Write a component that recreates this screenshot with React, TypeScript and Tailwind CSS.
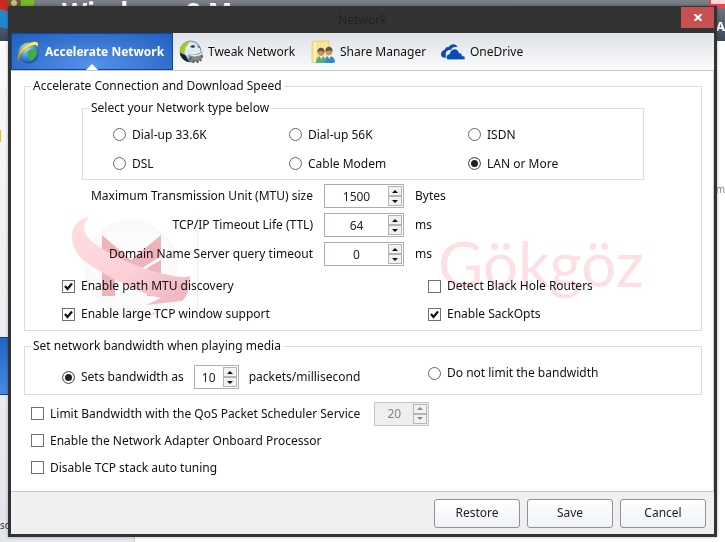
import React, { useState } from "react";

function GlobeIcon() {
  return (
    <svg width="24" height="24" viewBox="0 0 24 24" aria-hidden="true">
      <defs>
        <radialGradient id="sea" cx="0.4" cy="0.3" r="0.8">
          <stop offset="0" stopColor="#b9e4fa" />
          <stop offset="0.5" stopColor="#3d8fd6" />
          <stop offset="1" stopColor="#0b3f92" />
        </radialGradient>
        <linearGradient id="ring" x1="0" y1="1" x2="1" y2="0">
          <stop offset="0" stopColor="#c98a00" />
          <stop offset="0.5" stopColor="#ffe14a" />
          <stop offset="1" stopColor="#fff6a0" />
        </linearGradient>
      </defs>
      <circle cx="12.500" cy="13" r="10.500" fill="url(#sea)" />
      <path d="M6 6c3-3 6-4 8-3-1 2-4 3-5 5-2 1-3 3-4 3 0-2 0-3 1-5z" fill="#8fd0c0" />
      <path d="M12 11c3-2 7-3 9 0 0 5-3 8-6 10-2-1-1-4-3-6-1-2-2-2 0-4z" fill="#43ac3c" />
      <path d="M3 21C0 17 4 8 12 4c5-3 10-3 10 0 0 1 0 2-1 3 0-3-4-2-8 0C7 10 2 16 3 21z" fill="url(#ring)" stroke="#b98600" strokeWidth="0.5" />
    </svg>
  );
}

function TweakIcon() {
  return (
    <svg width="24" height="24" viewBox="0 0 24 24" aria-hidden="true">
      <defs>
        <radialGradient id="ball" cx="0.5" cy="0.35" r="0.7">
          <stop offset="0" stopColor="#ffffff" />
          <stop offset="0.6" stopColor="#b9d2e2" />
          <stop offset="1" stopColor="#18384e" />
        </radialGradient>
      </defs>
      <circle cx="11.500" cy="11.500" r="10.500" fill="url(#ball)" stroke="#3e5566" strokeWidth="0.6" />
      <path d="M1 11c0-5 4-9 9-9-1 3-3 4-4 7l-1 5c-2 0-4-1-4-3z" fill="#a3cc1d" />
      <path d="M1 13c2 1 5 1 6 3l3 6C5 21 1 17 1 13z" fill="#14202a" />
      <path d="M6 10c3-4 10-5 14-3l2 5c-4 4-11 5-15 3z" fill="#dfeaf3" />
      <path d="M11 7c1-2 4-2 5-1l-1 2zM18 6l3 1-1 1z" fill="#243746" />
      <path d="M9 13c3 2 6 2 9 1l5-2 1 4-2 4-5 2-5-1-2-3z" fill="#85898b" />
      <path d="M11 20l1-3m2 6l1-3m4 3l-1-3m4 1l-1-2m3-2l-2-1" stroke="#5d6163" strokeWidth="2" />
      <path d="M9 13.500c4 3 9 3 14 0" stroke="#e4e7e8" strokeWidth="1.500" fill="none" />
    </svg>
  );
}

function ShareIcon() {
  return (
    <svg width="24" height="24" viewBox="0 0 24 24" aria-hidden="true">
      <path d="M1 2l3-1h14v20l-14 2-3-1z" fill="#f8e596" stroke="#e2c55c" strokeWidth="0.700" />
      <path d="M4 2v20" stroke="#fff7cd" strokeWidth="1.500" />
      <path d="M5 23c0-5 2-7 5-7s5 2 5 7z" fill="#5aab82" />
      <path d="M14 23c0-5 1-7 4-7s6 2 6 6l-2 1z" fill="#2f8fc4" />
      <path d="M8.500 16l1.700 3 1.700-3zM16.500 16l1.700 3 1.700-3z" fill="#e9f3f4" />
      <circle cx="10" cy="12.500" r="3.200" fill="#c9936a" />
      <circle cx="18" cy="12" r="3.200" fill="#c9936a" />
      <path d="M6.500 13c-1-7 8-7 7 0-1-2-5-3-7 0zM14.500 12c-1-7 8-7 7 0-1-2-5-2-7 0z" fill="#5d5546" />
    </svg>
  );
}

function CloudIcon() {
  return (
    <svg width="24" height="16" viewBox="0 0 25 16" aria-hidden="true" fill="#0b4bb5">
      <path d="M5 14C1 14 0 12 0 10s2-4 4-4c0-2 2-4 4-3 2-4 8-4 9 0-4-1-6 1-7 3-4 0-5 2-5 4z" />
      <path d="M8 16c-3 0-4-5 1-6 0-5 8-8 10-1 2 0 3 1 3 3 4 0 4 4 1 4z" stroke="#edeff2" strokeWidth="0.600" />
    </svg>
  );
}

function Choice({
  type,
  name,
  label,
  checked = false,
}: {
  type: "radio" | "checkbox";
  name?: string;
  label: string;
  checked?: boolean;
}) {
  if (type === "radio") {
    return (
      <label className="flex items-center gap-1.5 leading-4">
        <input
          type="radio"
          name={name}
          defaultChecked={checked}
          className="size-[13px] shrink-0 appearance-none rounded-full border border-[#666] bg-white checked:bg-[#222] checked:shadow-[inset_0_0_0_2px_white]"
        />
        <span className="whitespace-nowrap">{label}</span>
      </label>
    );
  }
  return (
    <label className="flex items-center gap-1.5 leading-4">
      <span className="grid size-[13px] shrink-0">
        <input
          type="checkbox"
          defaultChecked={checked}
          className="peer col-start-1 row-start-1 size-[13px] appearance-none border border-[#707070] bg-white"
        />
        <svg
          viewBox="0 0 13 13"
          aria-hidden="true"
          className="pointer-events-none invisible col-start-1 row-start-1 size-[13px] peer-checked:visible"
        >
          <path d="M3 6l2.500 3L10 3.500" fill="none" stroke="#111" strokeWidth="2.200" />
        </svg>
      </span>
      <span className="whitespace-nowrap">{label}</span>
    </label>
  );
}

function Spinner({
  id,
  value,
  width,
  disabled = false,
}: {
  id: string;
  value: number;
  width: string;
  disabled?: boolean;
}) {
  const [current, setCurrent] = useState(value);
  const button =
    "flex h-[10px] w-[14px] items-center justify-center border border-[#b4b4b8] bg-[#f2f2f2]";
  const arrow = disabled ? "#8a8a8a" : "#111";
  return (
    <div
      className={`flex h-6 items-center border pr-px ${width} ${
        disabled ? "border-[#c4c4c4] bg-[#efefef] text-[#838383]" : "border-[#abadb3] bg-white text-[#222]"
      }`}
    >
      <input
        id={id}
        type="text"
        inputMode="numeric"
        disabled={disabled}
        value={current}
        onChange={(e) => setCurrent(Number(e.target.value) || 0)}
        className="h-full w-0 min-w-0 flex-1 bg-transparent text-center outline-none"
      />
      <div className="flex flex-col">
        <button type="button" aria-label="Increase" disabled={disabled} className={button} onClick={() => setCurrent(current + 1)}>
          <svg width="6" height="3" viewBox="0 0 6 3">
            <path d="M0 3L3 0l3 3z" fill={arrow} />
          </svg>
        </button>
        <button type="button" aria-label="Decrease" disabled={disabled} className={button} onClick={() => setCurrent(current - 1)}>
          <svg width="6" height="3" viewBox="0 0 6 3">
            <path d="M0 0h6L3 3z" fill={arrow} />
          </svg>
        </button>
      </div>
    </div>
  );
}

function Group({ title, className, children }: { title: string; className: string; children: React.ReactNode }) {
  return (
    <fieldset className={`border border-[#dcdcdc] ${className}`}>
      <legend className="ml-1.5 h-5 px-0.5 leading-5">{title}</legend>
      {children}
    </fieldset>
  );
}

function Backdrop() {
  return (
    <div aria-hidden="true" className="absolute inset-0 flex flex-col overflow-hidden bg-white">
      <div className="flex h-[41px] shrink-0 justify-between overflow-hidden bg-linear-to-b from-[#7c8088] to-[#3c4758]">
        <div className="flex">
          <svg width="34" height="34" viewBox="0 0 34 34">
            <path d="M0 0h17v14L0 9z" fill="#c92b20" />
            <path d="M17 0h17v10L17 14z" fill="#78b928" />
            <path d="M0 10l17 5v16L0 27z" fill="#2387cf" />
            <circle cx="14" cy="3" r="7" fill="#6c5833" />
            <circle cx="14" cy="3" r="3" fill="#cdbb86" />
          </svg>
          <span className="-mt-0.5 ml-7 text-[26px] leading-7 font-bold text-white">Windows 8 Manager</span>
        </div>
        <div className="flex w-4 flex-col items-end">
          <div className="h-2 w-4 shrink-0 rounded-bl border-b-4 border-l-2 border-[#ed4550] bg-[#fbdcdc]" />
          <span className="mt-2.5 text-[13px] leading-4 font-bold text-white">A</span>
        </div>
      </div>
      <div className="flex flex-1 justify-between">
        <div className="flex w-[135px] flex-col border-r border-[#c8cacd] bg-linear-to-b from-[#fafbfc] to-[#e2e5e9]">
          <div className="mt-[89px] h-3 w-px bg-[#fcbc14]" />
          <div className="mt-[195px] h-[58px] border-y border-[#0a3f9c] bg-linear-to-b from-[#2464c2] to-[#4989e6]" />
          <span className="mt-[124px] text-[10px] leading-3 text-[#333]">so</span>
        </div>
        <span className="mt-[140px] text-[10px] leading-4 text-[#888]">m</span>
      </div>
    </div>
  );
}

function Watermark() {
  return (
    <div aria-hidden="true" className="pointer-events-none absolute inset-0 mix-blend-multiply">
      <svg className="absolute top-[208px] left-[59px]" width="130" height="108" viewBox="0 0 130 108">
        <defs>
          <linearGradient id="swoosh" x1="0" y1="0" x2="1" y2="1">
            <stop offset="0" stopColor="#ffdfe3" />
            <stop offset="0.55" stopColor="#fcd0d5" />
            <stop offset="1" stopColor="#ebb4ba" />
          </linearGradient>
          <radialGradient id="halo">
            <stop offset="0.7" stopColor="#777" stopOpacity="0.02" />
            <stop offset="1" stopColor="#777" stopOpacity="0.045" />
          </radialGradient>
        </defs>
        <circle cx="61" cy="53" r="47" fill="url(#halo)" />
        <path d="M32 21L61 46 91 21v21L60 62 45 55v27H32z" fill="#edb4ba" />
        <path d="M91 46v36H77V54z" fill="#edb4ba" />
        <path
          d="M19 3C8 5 2 12 2 22c0 12 6 20 15 27 18 12 38 22 62 32l12 3-15 7 36-4c5-4 8-12 8-25-4 2-10 1-16 0-24-4-50-14-73-28C13 23 10 13 19 3z"
          fill="url(#swoosh)"
        />
        <path d="M98 92c-14 8-31 11-47 9 8 3 27 2 35-1z" fill="#fbdcdf" />
        <path d="M127.500 4v91" stroke="#fde9eb" />
      </svg>
      <span className="absolute top-[217px] left-[427px] font-[Lato,sans-serif] text-[62px] leading-[80px] text-[#f03c50]/16">
        Gökgöz
      </span>
    </div>
  );
}

export default function App() {
  const tab = "flex items-center gap-[5px] whitespace-nowrap";
  const action =
    "h-[29px] w-[86px] rounded-[3px] border border-[#8e939b] bg-linear-to-b from-white to-[#f0f2f4] text-[#222]";
  return (
    <main className="relative flex min-h-screen overflow-hidden font-['Noto_Sans','Open_Sans',sans-serif] text-[12px] text-[#111]">
      <Backdrop />
      <section
        role="dialog"
        aria-labelledby="dialog-title"
        className="relative mx-2 mt-1.5 mb-[5px] flex min-w-0 flex-1 flex-col border-3 border-t-0 border-[#333] bg-white shadow-[0_0_3px_rgba(0,0,0,0.3)]"
      >
        <header className="relative flex h-[27px] shrink-0 items-start justify-center bg-[#333]">
          <h1 id="dialog-title" className="leading-7 text-[#222]">
            Network
          </h1>
          <button
            type="button"
            aria-label="Close"
            className="absolute top-px right-0 flex h-[21px] w-[33px] items-center justify-center bg-[#c75050]"
          >
            <svg width="8" height="7" viewBox="0 0 8 7">
              <path d="M0.500 0L7.500 7M7.500 0L0.500 7" stroke="white" strokeWidth="2" />
            </svg>
          </button>
        </header>

        <nav className="flex h-[38px] shrink-0 border-b border-[#c6c7c9] bg-linear-to-b from-[#dfe2e6] to-[#fafbfc]">
          <button
            type="button"
            className={`${tab} relative w-[162px] border border-[#0b47a6] bg-[radial-gradient(ellipse_at_50%_90%,#5792ea,#1f5fbe)] pl-1 font-bold text-white`}
          >
            <GlobeIcon />
            Accelerate Network
            <svg className="absolute -bottom-px left-[74px]" width="12" height="6" viewBox="0 0 12 6" aria-hidden="true">
              <path d="M0 6l6-6 6 6z" fill="white" />
            </svg>
          </button>
          <button type="button" className={`${tab} w-[132px] pl-1.5`}>
            <TweakIcon />
            Tweak Network
          </button>
          <button type="button" className={`${tab} w-[130px] pl-1.5`}>
            <ShareIcon />
            Share Manager
          </button>
          <button type="button" className={`${tab} pl-1.5`}>
            <CloudIcon />
            OneDrive
          </button>
        </nav>

        <div className="relative flex-1 border-r border-b border-[#c8c8c8] pt-[5px] pr-[11px] pb-[10px] pl-[13px]">
          <Group title="Accelerate Connection and Download Speed" className="pt-0.5 pb-0.5">
            <Group title="Select your Network type below" className="mx-[57px] pt-0.5 pb-px">
              <div className="grid auto-rows-[29px] grid-cols-[176px_179px_auto] pl-[30px]">
                <Choice type="radio" name="connection" label="Dial-up 33.6K" />
                <Choice type="radio" name="connection" label="Dial-up 56K" />
                <Choice type="radio" name="connection" label="ISDN" />
                <Choice type="radio" name="connection" label="DSL" />
                <Choice type="radio" name="connection" label="Cable Modem" />
                <Choice type="radio" name="connection" label="LAN or More" checked />
              </div>
            </Group>
            <div className="mt-1 grid grid-cols-[288px_80px_auto] items-center gap-x-[11px] gap-y-[5px]">
              <label htmlFor="mtu" className="text-right">
                Maximum Transmission Unit (MTU) size
              </label>
              <Spinner id="mtu" value={1500} width="w-20" />
              <span>Bytes</span>
              <label htmlFor="ttl" className="text-right">
                TCP/IP Timeout Life (TTL)
              </label>
              <Spinner id="ttl" value={64} width="w-20" />
              <span>ms</span>
              <label htmlFor="dns" className="text-right">
                Domain Name Server query timeout
              </label>
              <Spinner id="dns" value={0} width="w-20" />
              <span>ms</span>
            </div>
            <div className="mt-1.5 grid auto-rows-[28px] grid-cols-[366px_auto] pl-[37px]">
              <Choice type="checkbox" label="Enable path MTU discovery" checked />
              <Choice type="checkbox" label="Detect Black Hole Routers" />
              <Choice type="checkbox" label="Enable large TCP window support" checked />
              <Choice type="checkbox" label="Enable SackOpts" checked />
            </div>
          </Group>

          <Group title="Set network bandwidth when playing media" className="mt-[5px] pt-[9px] pb-[5px]">
            <div className="grid grid-cols-[366px_auto] items-start pl-[37px]">
              <div className="flex items-center gap-2.5">
                <Choice type="radio" name="bandwidth" label="Sets bandwidth as" checked />
                <Spinner id="packets" value={10} width="w-[45px]" />
                <label htmlFor="packets">packets/millisecond</label>
              </div>
              <Choice type="radio" name="bandwidth" label="Do not limit the bandwidth" />
            </div>
          </Group>

          <div className="mt-[5px] grid auto-rows-[27px] pl-[7px]">
            <div className="flex items-center gap-3.5">
              <Choice type="checkbox" label="Limit Bandwidth with the QoS Packet Scheduler Service" />
              <Spinner id="qos" value={20} width="w-[55px]" disabled />
            </div>
            <Choice type="checkbox" label="Enable the Network Adapter Onboard Processor" />
            <Choice type="checkbox" label="Disable TCP stack auto tuning" />
          </div>
        </div>

        <footer className="flex h-[42px] shrink-0 items-center justify-end gap-[7px] bg-[#f0f0f0] pr-2">
          <button type="button" className={action}>Restore</button>
          <button type="button" className={action}>Save</button>
          <button type="button" className={action}>Cancel</button>
        </footer>
        <Watermark />
      </section>
    </main>
  );
}
